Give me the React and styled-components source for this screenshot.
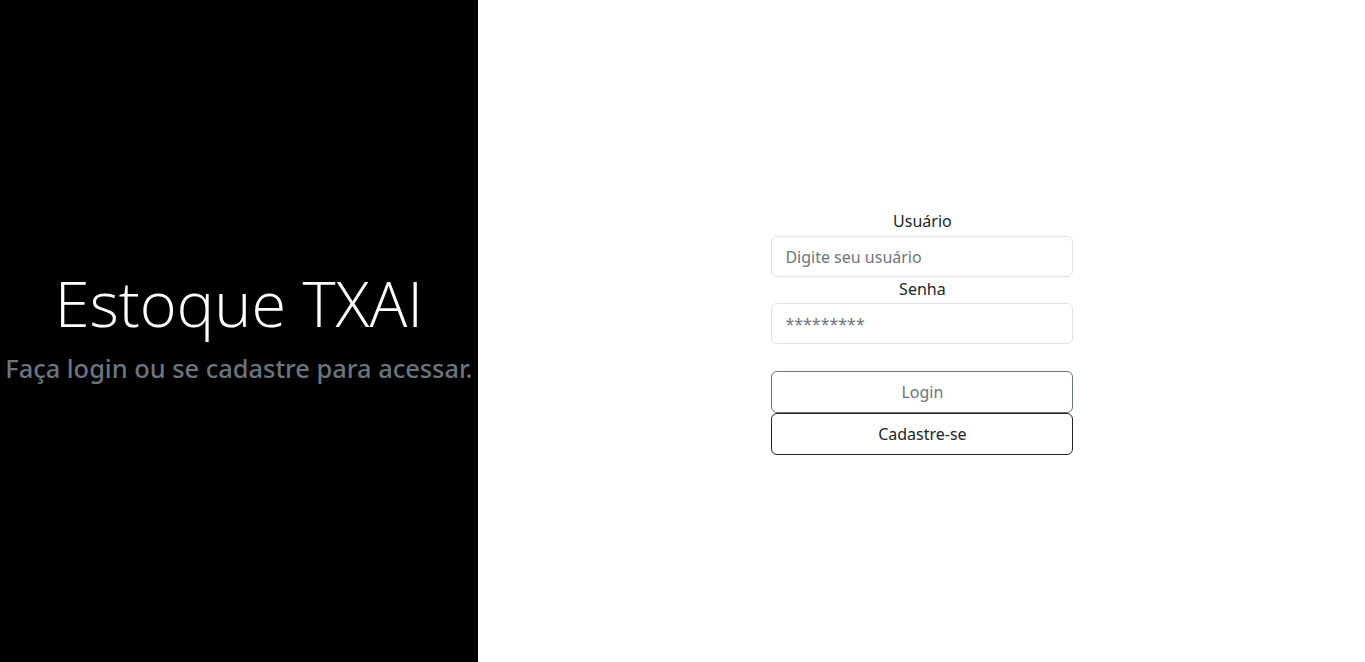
import React from "react";
import styled, { createGlobalStyle } from "styled-components";

const GlobalStyle = createGlobalStyle`
  * {
    box-sizing: border-box;
  }
  html, body {
    margin: 0;
    padding: 0;
    height: 100%;
  }
  body {
    font-family: "Noto Sans", "Open Sans", sans-serif;
    color: #212529;
    background: #ffffff;
  }
  #root {
    height: 100%;
  }
`;

const Page = styled.div`
  display: flex;
  width: 100%;
  height: 662px;
`;

const Banner = styled.div`
  width: 35%;
  background: #000000;
  display: flex;
  flex-direction: column;
  align-items: center;
  justify-content: center;
  text-align: center;
  padding-bottom: 10px;
`;

const Title = styled.h1`
  margin: 0 0 14px;
  font-family: "Open Sans", "Noto Sans", sans-serif;
  font-weight: 300;
  font-size: 63px;
  line-height: 70px;
  color: #ffffff;
`;

const Subtitle = styled.h4`
  margin: 0;
  font-family: "Noto Sans", sans-serif;
  font-weight: 500;
  font-size: 25.4px;
  line-height: 32px;
  color: #6c757d;
  white-space: nowrap;
`;

const FormArea = styled.div`
  flex: 1;
  display: flex;
  align-items: center;
  justify-content: center;
  padding-left: 2px;
`;

const Form = styled.form`
  width: 302px;
  display: flex;
  flex-direction: column;
  padding-top: 2px;
`;

const Label = styled.label`
  display: block;
  text-align: center;
  font-size: 16px;
  line-height: 24px;
  margin-bottom: ${(p) => p.$gap || 0}px;
`;

const Input = styled.input`
  display: block;
  width: 100%;
  height: 41px;
  padding: 6px 13px;
  font-family: inherit;
  font-size: 16px;
  color: #212529;
  background: #ffffff;
  border: 1px solid #dee2e6;
  border-radius: 6px;
  outline: none;

  &::placeholder {
    color: #6c757d;
  }
`;

const Button = styled.button`
  display: block;
  width: 100%;
  height: 42px;
  font-family: inherit;
  font-size: 16px;
  background: transparent;
  border-radius: 6px;
  cursor: pointer;
  color: ${(p) => p.$color};
  border: 1px solid ${(p) => p.$color};
  margin-top: ${(p) => p.$top || 0}px;
`;

export default function App() {
  return (
    <>
      <GlobalStyle />
      <Page>
        <Banner>
          <Title>Estoque TXAI</Title>
          <Subtitle>Faça login ou se cadastre para acessar.</Subtitle>
        </Banner>
        <FormArea>
          <Form onSubmit={(e) => e.preventDefault()}>
            <Label htmlFor="usuario" $gap={3}>Usuário</Label>
            <Input id="usuario" type="text" placeholder="Digite seu usuário" />
            <Label htmlFor="senha" $gap={2}>Senha</Label>
            <Input id="senha" type="text" placeholder="*********" />
            <Button type="submit" $color="#6c757d" $top={27}>Login</Button>
            <Button type="button" $color="#212529" $top={0}>Cadastre-se</Button>
          </Form>
        </FormArea>
      </Page>
    </>
  );
}
